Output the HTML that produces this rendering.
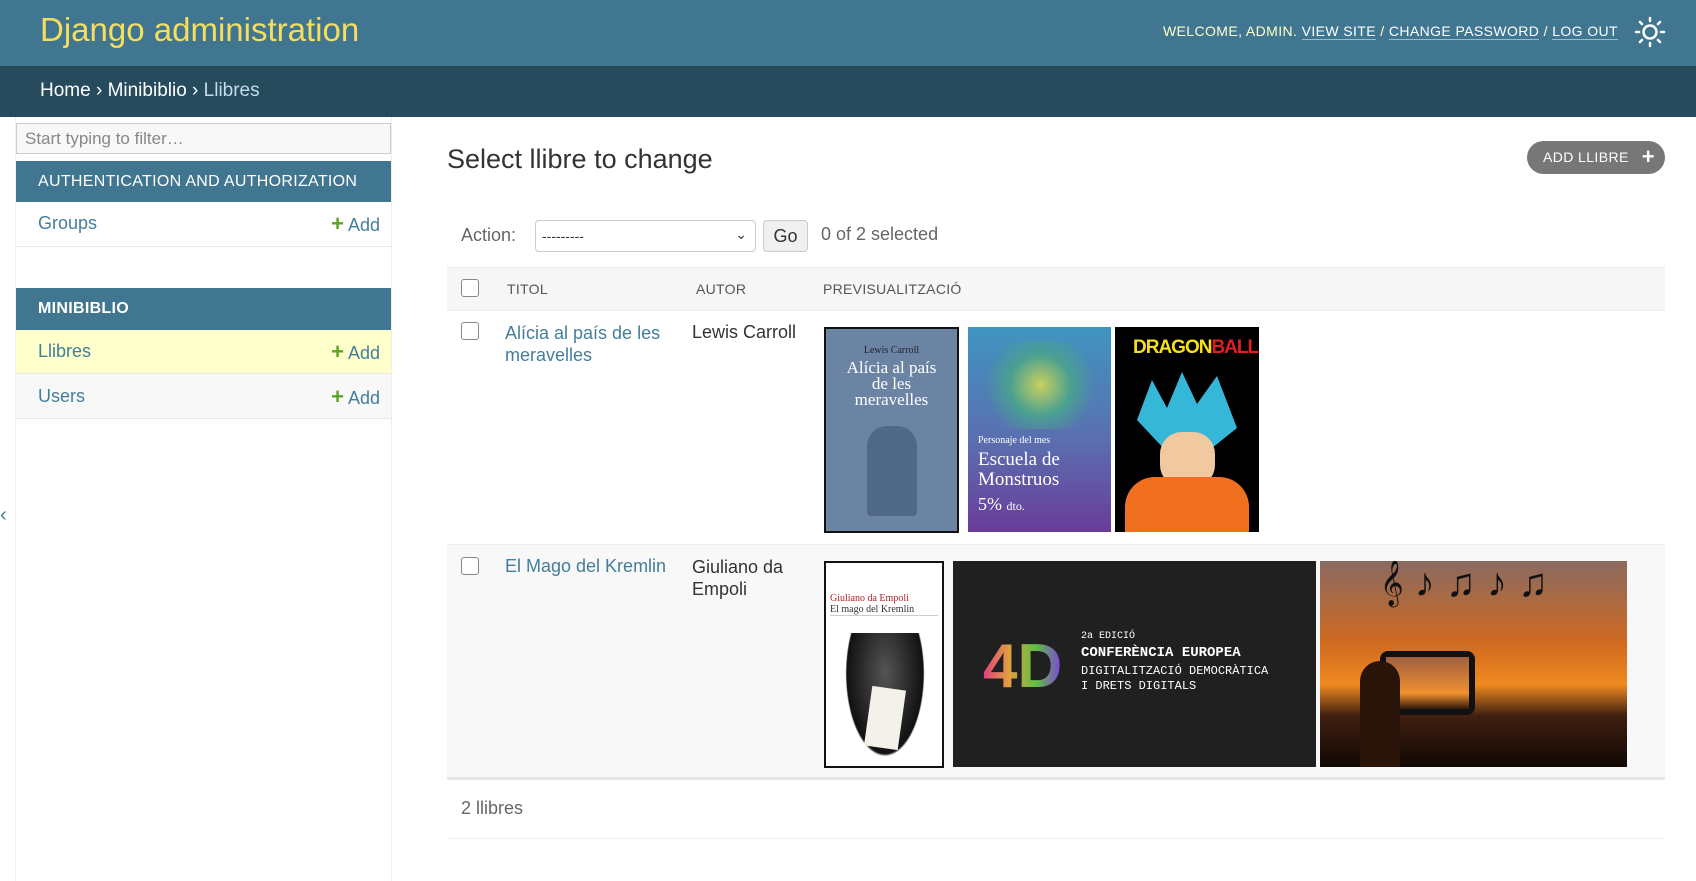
<!DOCTYPE html>
<html><head><meta charset="utf-8"><style>
*{box-sizing:border-box;margin:0;padding:0}
body{width:1696px;height:881px;overflow:hidden;background:#fff;font-family:"Liberation Sans",sans-serif;color:#333;position:relative}
.a{position:absolute;white-space:nowrap}
a{color:#447e9b;text-decoration:none}
.hdr{left:0;top:0;width:1696px;height:66px;background:#417690}
.bc{left:0;top:66px;width:1696px;height:51px;background:#264b5d}
.ul{border-bottom:1px solid rgba(255,255,255,.5)}
.side{left:15px;top:117px;width:377px;height:764px;border-left:1px solid #eee;border-right:1px solid #eee}
.mh{left:16px;width:375px;background:#417690;color:#fff;font-size:16px;padding-left:22px;line-height:42px;letter-spacing:.3px}
.row{left:16px;width:375px;border-bottom:1px solid #e8e8e8;font-size:18px}
.row span.n{position:absolute;left:22px;color:#447e9b}
.row span.ad{position:absolute;right:11px;color:#447e9b}
.row span.ad b{color:#5fa225;font-size:22px;margin-right:4px}
.cb{width:18px;height:18px;border:1px solid #888;border-radius:3px;background:#fff}
.th{font-size:14px;color:#555;letter-spacing:.3px}
</style></head><body>
<div class="a hdr"></div>
<div class="a" style="left:40px;top:11px;font-size:33px;color:#f5dd5d">Django administration</div>
<div class="a" style="right:78px;top:23px;font-size:14px;color:#ffc;letter-spacing:.4px">WELCOME, <b style="font-weight:normal">ADMIN</b>. <span class="ul" style="color:#fff">VIEW SITE</span> / <span class="ul" style="color:#fff">CHANGE PASSWORD</span> / <span class="ul" style="color:#fff">LOG OUT</span></div>
<svg class="a" style="left:1634px;top:16px" width="32" height="32" viewBox="0 0 32 32"><circle cx="16" cy="16" r="6.5" fill="none" stroke="#fff" stroke-width="2.5"/><g stroke="#fff" stroke-width="2.5" stroke-linecap="round"><path d="M16 2v3M16 27v3M2 16h3M27 16h3M6 6l2 2M24 24l2 2M26 6l-2 2M8 24l-2 2"/></g></svg>
<div class="a bc"></div>
<div class="a" style="left:40px;top:80px;font-size:19px;color:#fff">Home › Minibiblio › <span style="color:#c4dce8">Llibres</span></div>

<div class="a side"></div>
<div class="a" style="left:16px;top:123px;width:375px;height:31px;border:1px solid #ccc;background:#f8f8f8;font-size:17px;color:#888;padding:5px 8px">Start typing to filter…</div>
<div class="a mh" style="top:161px;height:41px">AUTHENTICATION AND AUTHORIZATION</div>
<div class="a row" style="top:201px;height:46px"><span class="n" style="top:12px">Groups</span><span class="ad" style="top:10px"><b>+</b>Add</span></div>
<div class="a mh" style="top:288px;height:42px;font-weight:bold">MINIBIBLIO</div>
<div class="a row" style="top:330px;height:44px;background:#ffffcc"><span class="n" style="top:11px">Llibres</span><span class="ad" style="top:9px"><b>+</b>Add</span></div>
<div class="a row" style="top:374px;height:45px;background:#f8f8f8"><span class="n" style="top:12px">Users</span><span class="ad" style="top:10px"><b>+</b>Add</span></div>
<div class="a" style="left:0;top:504px;font-size:20px;color:#447e9b">‹</div>

<div class="a" style="left:447px;top:144px;font-size:27px;color:#333">Select llibre to change</div>
<div class="a" style="left:1527px;top:141px;width:138px;height:33px;border-radius:17px;background:#777;color:#fff;font-size:14px;line-height:33px;padding-left:16px;letter-spacing:.4px">ADD LLIBRE <b style="font-size:22px;position:absolute;right:10px;top:-1px">+</b></div>

<div class="a" style="left:461px;top:225px;font-size:18px;color:#666">Action:</div>
<div class="a" style="left:535px;top:220px;width:221px;height:32px;border:1px solid #ccc;border-radius:4px;font-size:14px;padding:7px 6px;color:#333">---------<span style="position:absolute;right:8px;top:5px;font-size:14px">⌄</span></div>
<div class="a" style="left:763px;top:220px;width:45px;height:32px;border:1px solid #ccc;border-radius:4px;background:#f0f0f0;font-size:18px;text-align:center;line-height:30px">Go</div>
<div class="a" style="left:821px;top:224px;font-size:18px;color:#666">0 of 2 selected</div>

<div class="a" style="left:447px;top:267px;width:1218px;height:44px;background:#f6f6f6;border-top:1px solid #eee;border-bottom:1px solid #eee"></div>
<div class="a cb" style="left:461px;top:279px"></div>
<div class="a th" style="left:507px;top:281px">TITOL</div>
<div class="a th" style="left:696px;top:281px">AUTOR</div>
<div class="a th" style="left:823px;top:281px">PREVISUALITZACIÓ</div>

<div class="a cb" style="left:461px;top:322px"></div>
<div class="a" style="left:505px;top:322px;font-size:18px;line-height:22px;color:#447e9b">Alícia al país de les<br>meravelles</div>
<div class="a" style="left:692px;top:322px;font-size:18px;color:#333">Lewis Carroll</div>
<div class="a" style="left:824px;top:327px;width:135px;height:206px;background:#6b84a3;border:2px solid #111;color:#fff;text-align:center;font-family:'Liberation Serif',serif">
<div style="font-size:10px;color:#223;margin-top:16px">Lewis Carroll</div><div style="font-size:17px;line-height:16px;margin-top:4px">Alícia al país<br>de les<br>meravelles</div>
<div style="margin:18px auto 0;width:50px;height:90px;background:#4f6886;border-radius:20px 20px 4px 4px"></div></div>
<div class="a" style="left:968px;top:327px;width:143px;height:205px;background:linear-gradient(#3f95c0,#5a6fb0 55%,#6a3c9a);color:#fff;font-family:'Liberation Serif',serif;padding-left:10px">
<div style="height:88px;margin:14px 8px 0 0;background:radial-gradient(circle,#c8d060 0,#4aa090 40%,transparent 72%)"></div>
<div style="font-size:10px;margin-top:6px">Personaje del mes</div><div style="font-size:19px;line-height:20px;margin-top:4px">Escuela de<br>Monstruos</div><div style="font-size:18px;margin-top:4px">5% <span style="font-size:12px">dto.</span></div></div>
<div class="a" style="left:1115px;top:327px;width:144px;height:205px;background:#000;overflow:hidden">
<div style="position:absolute;left:18px;top:10px;font:bold 19px 'Liberation Sans';color:#f5e01a;letter-spacing:-1px">DRAGON<span style="color:#e02020">BALL</span></div>
<div style="position:absolute;left:22px;top:45px;width:100px;height:80px;background:#35b8d8;clip-path:polygon(0 60%,15% 10%,30% 45%,45% 0,60% 40%,80% 5%,100% 70%,70% 100%,30% 100%)"></div>
<div style="position:absolute;left:45px;top:105px;width:55px;height:55px;background:#f1c9a0;border-radius:40%"></div>
<div style="position:absolute;left:10px;top:150px;width:124px;height:60px;background:#f07020;border-radius:30px 30px 0 0"></div></div>

<div class="a" style="left:447px;top:544px;width:1218px;height:236px;background:#f8f8f8;border-top:1px solid #eee;border-bottom:3px solid #e6e6e6"></div>
<div class="a cb" style="left:461px;top:557px"></div>
<div class="a" style="left:505px;top:556px;font-size:18px;color:#447e9b">El Mago del Kremlin</div>
<div class="a" style="left:692px;top:556px;font-size:18px;line-height:22px;color:#333">Giuliano da<br>Empoli</div>
<div class="a" style="left:824px;top:561px;width:120px;height:207px;background:#fff;border:2px solid #111;font-family:'Liberation Serif',serif;padding:30px 4px 0">
<div style="font-size:10px;color:#b0202a">Giuliano da Empoli</div><div style="font-size:10px;color:#333;border-bottom:1px solid #ccc">El mago del Kremlin</div>
<div style="position:absolute;left:14px;top:70px;width:90px;height:135px;background:radial-gradient(ellipse at 50% 30%,#555,#111 60%,transparent 62%)"></div>
<div style="position:absolute;left:42px;top:125px;width:34px;height:60px;background:#f4f0ea;transform:rotate(8deg)"></div></div>
<div class="a" style="left:953px;top:561px;width:363px;height:206px;background:#202020;color:#fff;font-family:'Liberation Mono',monospace">
<div style="position:absolute;left:30px;top:70px;font:bold 62px 'Liberation Sans';background:linear-gradient(90deg,#e04080,#e0a040,#60c040,#8040e0);-webkit-background-clip:text;color:transparent">4D</div>
<div style="position:absolute;left:128px;top:70px;font-size:10px">2a EDICIÓ</div>
<div style="position:absolute;left:128px;top:84px;font-size:14px;font-weight:bold">CONFERÈNCIA EUROPEA</div>
<div style="position:absolute;left:128px;top:103px;font-size:12px;line-height:15px">DIGITALITZACIÓ DEMOCRÀTICA<br>I DRETS DIGITALS</div></div>
<div class="a" style="left:1320px;top:561px;width:307px;height:206px;background:linear-gradient(#8a6a60,#d06a20 40%,#f08a20 60%,#402010 75%,#100804);overflow:hidden">
<div style="position:absolute;left:60px;top:90px;width:95px;height:64px;background:#111;border-radius:8px;padding:6px"><div style="width:100%;height:100%;background:linear-gradient(#a06040,#f09030 70%,#301808)"></div></div>
<div style="position:absolute;left:40px;top:100px;width:40px;height:110px;background:#2a140a;border-radius:20px 20px 0 0"></div>
<div style="position:absolute;left:60px;top:0;font-size:40px;color:#111">𝄞 ♪ ♫ ♪ ♫</div></div>

<div class="a" style="left:461px;top:798px;font-size:18px;color:#666">2 llibres</div>
<div class="a" style="left:447px;top:838px;width:1218px;height:1px;background:#eee"></div>
</body></html>
